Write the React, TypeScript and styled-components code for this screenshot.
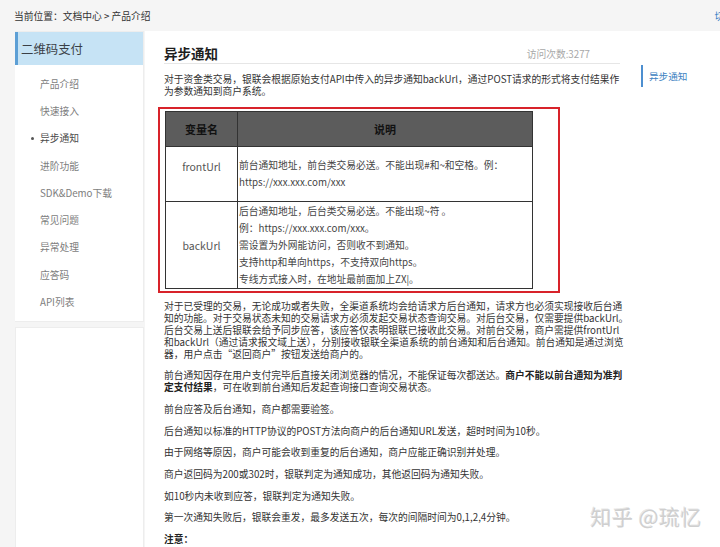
import React from "react";
import styled, { createGlobalStyle } from "styled-components";

const GlobalStyle = createGlobalStyle`
  html, body { margin: 0; padding: 0; }
  body {
    background: #f5f5f5;
    font-family: "Noto Sans CJK SC", "Noto Sans", "Liberation Sans", sans-serif;
    overflow: hidden;
  }
`;

const Page = styled.div`
  position: relative;
  width: 720px;
  height: 547px;
  overflow: hidden;
  background: #f5f5f5;
  display: flex;
  flex-direction: column;
`;

const TopBar = styled.div`
  height: 31px;
  flex: none;
  display: flex;
  align-items: center;
  justify-content: space-between;
  padding-left: 14px;
  font-size: 9.75px;
  color: #333;
`;

const SwitchLink = styled.span`
  color: #3b7fc4;
  margin-right: -14px;
`;

const Body = styled.div`
  flex: 1;
  display: flex;
  padding-left: 15px;
  min-height: 0;
`;

const LeftCol = styled.div`
  width: 129px;
  flex: none;
  display: flex;
  flex-direction: column;
  gap: 5px;
`;

const SideNav = styled.div`
  background: #fff;
  border: 1px solid #ededed;
  border-left: none;
`;

const SideHeader = styled.div`
  height: 33px;
  display: flex;
  align-items: center;
  background: #c6e3f5;
  border-left: 3px solid #5d9fd5;
  padding-left: 3px;
  font-size: 12.4px;
  color: #3a3f46;
`;

const NavList = styled.ul`
  list-style: none;
  margin: 0;
  padding: 5px 0 5px 0;
`;

const NavItem = styled.li<{ $active?: boolean }>`
  position: relative;
  height: 27.3px;
  display: flex;
  align-items: center;
  padding-left: 25px;
  font-size: 9.75px;
  color: ${(p) => (p.$active ? "#4a4a4a" : "#7d7d7d")};
  &::before {
    content: "";
    display: ${(p) => (p.$active ? "block" : "none")};
    position: absolute;
    left: 16px;
    top: 50%;
    width: 3px;
    height: 3px;
    margin-top: -1px;
    border-radius: 50%;
    background: #555;
  }
`;

const Filler = styled.div`
  flex: 1;
  background: #fff;
  border: 1px solid #ededed;
  border-bottom: none;
`;

const Main = styled.div`
  flex: 1;
  margin-left: 1px;
  background: #fff;
  display: flex;
  gap: 21px;
  padding: 13px 0 0 19px;
`;

const Article = styled.div`
  width: 456px;
  flex: none;
  font-size: 9.75px;
  color: #333;
`;

const TitleRow = styled.div`
  height: 19px;
  display: flex;
  align-items: center;
  justify-content: space-between;
  padding-right: 30px;
  border-bottom: 1px solid #e6e6e6;
`;

const Title = styled.h1`
  margin: 0;
  font-size: 13.5px;
  font-weight: 700;
  color: #1e1e1e;
  line-height: 19px;
`;

const VisitCount = styled.span`
  font-size: 9.75px;
  color: #a8a8a8;
`;

const Para = styled.p<{ $top?: number }>`
  margin: ${(p) => (p.$top ?? 0)}px 0 9.9px 0;
  line-height: 11.8px;
`;

const ParaLine = styled.span`
  display: block;
  white-space: nowrap;
`;

const Strong = styled.b`
  font-weight: 700;
  color: #222;
`;

const Highlight = styled.div`
  width: 383px;
  margin: 6px 0 8px -6px;
  border: 2px solid #d8232a;
  padding: 2px 10px 2px 5px;
`;

const Table = styled.table`
  width: 368px;
  border-collapse: collapse;
  border: 1px solid #333;
  table-layout: fixed;
`;

const HeadCell = styled.th<{ $w?: number }>`
  width: ${(p) => (p.$w ? `${p.$w}px` : "auto")};
  height: 34px;
  background: #5c5c5c;
  border: 1px solid #333;
  font-size: 11px;
  font-weight: 700;
  color: #111;
  text-align: center;
  padding: 0;
`;

const Row = styled.tr<{ $h: number }>`
  height: ${(p) => p.$h}px;
`;

const NameCell = styled.td<{ $shift?: number }>`
  border: 1px solid #333;
  text-align: center;
  vertical-align: middle;
  font-size: 10.5px;
  color: #555;
  padding: 0 0 ${(p) => p.$shift ?? 0}px 0;
`;

const DescCell = styled.td`
  border: 1px solid #333;
  vertical-align: middle;
  font-size: 9.75px;
  color: #444;
  line-height: 17px;
  padding: 0 0 0 1px;
`;

const Line = styled.div``;

const Toc = styled.div`
  margin-top: 21px;
  height: 22px;
  border-left: 2px solid #4d8fd0;
  padding-left: 6px;
  font-size: 9.6px;
  line-height: 22px;
  color: #3d7fc1;
  white-space: nowrap;
`;

const Watermark = styled.div`
  position: absolute;
  right: 18px;
  bottom: 16px;
  font-size: 21px;
  color: #cfcfcf;
  letter-spacing: 0.5px;
  text-shadow: 1px 1px 0 #fff, -1px -1px 0 rgba(120, 120, 120, 0.18);
  white-space: nowrap;
`;

const navItems = [
  "产品介绍",
  "快速接入",
  "异步通知",
  "进阶功能",
  "SDK&Demo下载",
  "常见问题",
  "异常处理",
  "应答码",
  "API列表",
];

const p1Lines = [
  "对于已受理的交易，无论成功或者失败，全渠道系统均会给请求方后台通知，请求方也必须实现接收后台通",
  "知的功能。对于交易状态未知的交易请求方必须发起交易状态查询交易。对后台交易，仅需要提供backUrl。",
  "后台交易上送后银联会给予同步应答，该应答仅表明银联已接收此交易。对前台交易，商户需提供frontUrl",
  "和backUrl（通过请求报文域上送），分别接收银联全渠道系统的前台通知和后台通知。前台通知是通过浏览",
  "器，用户点击“返回商户”按钮发送给商户的。",
];

const singles = [
  "前台应答及后台通知，商户都需要验签。",
  "后台通知以标准的HTTP协议的POST方法向商户的后台通知URL发送，超时时间为10秒。",
  "由于网络等原因，商户可能会收到重复的后台通知，商户应能正确识别并处理。",
  "商户返回码为200或302时，银联判定为通知成功，其他返回码为通知失败。",
  "如10秒内未收到应答，银联判定为通知失败。",
  "第一次通知失败后，银联会重发，最多发送五次，每次的间隔时间为0,1,2,4分钟。",
];

export default function App() {
  return (
    <Page>
      <GlobalStyle />
      <TopBar>
        <span>当前位置：文档中心 &gt; 产品介绍</span>
        <SwitchLink>切换</SwitchLink>
      </TopBar>
      <Body>
        <LeftCol>
          <SideNav>
            <SideHeader>二维码支付</SideHeader>
            <NavList>
              {navItems.map((n) => (
                <NavItem key={n} $active={n === "异步通知"}>
                  {n}
                </NavItem>
              ))}
            </NavList>
          </SideNav>
          <Filler />
        </LeftCol>
        <Main>
          <Article>
            <TitleRow>
              <Title>异步通知</Title>
              <VisitCount>访问次数:3277</VisitCount>
            </TitleRow>
            <Para $top={10}>
              对于资金类交易，银联会根据原始支付API中传入的异步通知backUrl，通过POST请求的形式将支付结果作为参数通知到商户系统。
            </Para>
            <Highlight>
              <Table>
                <thead>
                  <tr>
                    <HeadCell $w={71}>变量名</HeadCell>
                    <HeadCell>说明</HeadCell>
                  </tr>
                </thead>
                <tbody>
                  <Row $h={55}>
                    <NameCell $shift={15}>frontUrl</NameCell>
                    <DescCell>
                      <Line>前台通知地址，前台类交易必送。不能出现#和~和空格。例：</Line>
                      <Line>https://xxx.xxx.com/xxx</Line>
                    </DescCell>
                  </Row>
                  <Row $h={87}>
                    <NameCell>backUrl</NameCell>
                    <DescCell>
                      <Line>后台通知地址，后台类交易必送。不能出现~符 。</Line>
                      <Line>例：https://xxx.xxx.com/xxx。</Line>
                      <Line>需设置为外网能访问，否则收不到通知。</Line>
                      <Line>支持http和单向https，不支持双向https。</Line>
                      <Line>专线方式接入时，在地址最前面加上ZX|。</Line>
                    </DescCell>
                  </Row>
                </tbody>
              </Table>
            </Highlight>
            <Para>
              {p1Lines.map((l) => (
                <ParaLine key={l}>{l}</ParaLine>
              ))}
            </Para>
            <Para>
              <ParaLine>
                前台通知因存在用户支付完毕后直接关闭浏览器的情况，不能保证每次都送达。
                <Strong>商户不能以前台通知为准判</Strong>
              </ParaLine>
              <ParaLine>
                <Strong>定支付结果</Strong>，可在收到前台通知后发起查询接口查询交易状态。
              </ParaLine>
            </Para>
            {singles.map((s) => (
              <Para key={s}>{s}</Para>
            ))}
            <Para>
              <Strong>注意：</Strong>
            </Para>
          </Article>
          <Toc>异步通知</Toc>
        </Main>
      </Body>
      <Watermark>知乎 @琉忆</Watermark>
    </Page>
  );
}
